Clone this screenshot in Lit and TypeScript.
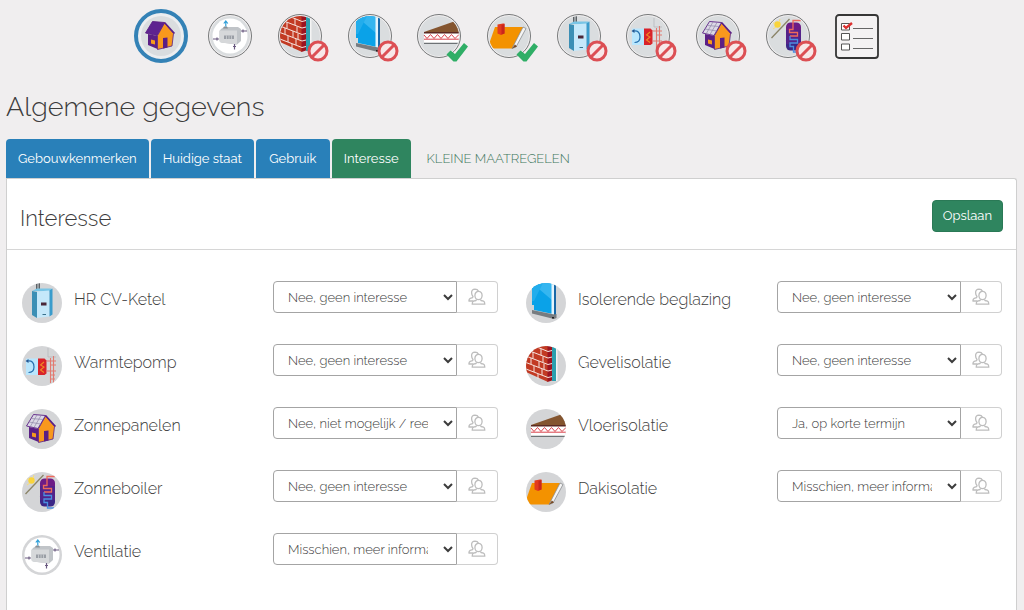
import { LitElement, html, css, svg, nothing } from "lit";
import { customElement, property, state } from "lit/decorators.js";
import { classMap } from "lit/directives/class-map.js";

type Art =
  | "home" | "ventilation" | "wall" | "glass" | "floor"
  | "roof" | "boiler" | "heatpump" | "panels" | "solar";

const house = (solar: boolean) => svg`
  <path d="M7 18 16.500 20V33L7 29Z" fill="#5b1f85"/>
  <path d="M10 23.500 14 24.500V28.500L10 27.500Z" fill="#f79a1c"/>
  <path d="M16.500 19.500 23.500 7 32.500 17.500 31 30 16.500 33.500Z" fill="#f8981d" stroke="#5b1f85" stroke-width=".8"/>
  <path d="M22 22 26.500 21.500V31.500L22 32.500Z" fill="#5b1f85"/>
  <path d="M4.500 17 11.500 5.500 23.500 6.500 16 19.500Z" fill=${solar ? "#dcd9e6" : "#5e2390"} stroke="#5b1f85" stroke-width=".9"/>
  <path d="M23.500 6.500 33.500 17.500" stroke="#5b1f85" stroke-width="1.600" fill="none"/>
  ${solar
    ? svg`<path d="M7 13 18.500 15M9.500 9.500 21 10.500M8 18 15 6M12 18.500 19 6.500" stroke="#8f86a8" stroke-width=".7" fill="none"/>`
    : nothing}`;

const art: Record<Art, () => unknown> = {
  home: () => house(false),
  panels: () => house(true),
  ventilation: () => svg`
    <circle cx="20" cy="20" r="17.500" fill="#fff"/>
    <path d="M11 13 14 11H28L31 13V25L27 28.500 11 26.500Q9.500 26 9.500 24V15Z" fill="#c0c4c8"/>
    <path d="M9.500 14.500 27 14.500V28.500L11 26.500Q9.500 26 9.500 24Z" fill="#d6d8da"/>
    <path d="M13 12.500H18L17 10.500H14Z" fill="#8a9096"/>
    <path d="M14 19.500H24V23H14Z" fill="#9a9ea5"/>
    <path d="M16.500 19.500V23M19 19.500V23M21.500 19.500V23" stroke="#d6d8db" stroke-width=".7"/>
    <path d="M15.800 10.500V6M13.800 7.500 15.800 5 17.800 7.500" fill="none" stroke="#2f9fd8" stroke-width="1.200"/>
    <path d="M31 15H37M33 13.500V16.500M3 23H9M7 21.500V24.500M24.500 28V33.500M23 30.500H26" fill="none" stroke="#6a5a80" stroke-width="1.200"/>`,
  wall: () => svg`
    <path d="M0 0H22V36L0 26Z" fill="#c23a23"/>
    <path d="M21.500 0H26V34.500L21.500 36Z" fill="#9c1420"/>
    <path d="M26 0H30V35H26Z" fill="#2b9fae"/>
    <path d="M30 0H31.500V35H30Z" fill="#f4f4f4"/>
    <path d="M6 -1 22 5.500 26 4.500M0 3.500 22 12 26 11M0 10 22 18.500 26 17.500M0 16.500 22 25 26 24M0 23 22 31.500 26 30.500M15 2.500V9M7 6V12.500M17 10.500V16M5 12V18M13 15V21M18 17.500V23M8 20V26M16 23V29M12 28V33" fill="none" stroke="#f6e4df" stroke-width="1"/>`,
  glass: () => svg`
    <path d="M6 0H27V31L8 27V22H6Z" fill="#0aa2e8"/>
    <path d="M6 0H27V18Z" fill="#35b6f0"/>
    <path d="M6 0H17L8 18H6Z" fill="#22adec"/>
    <path d="M25.500 0H28V31H25.500Z" fill="#e4f4fc"/>
    <path d="M28 1H30V33H28Z" fill="#1768a8"/>
    <path d="M6 27 28 31.500 30.500 31V35L28 36 6 30.500Z" fill="#777c80"/>
    <path d="M26 34H28V35.500H26Z" fill="#222"/>`,
  floor: () => svg`
    <path d="M5 16 35 5.500 40 12V16.500H5Z" fill="#84552f"/>
    <path d="M5 17H40V27H5Z" fill="#fff"/>
    <path d="M5 16.800H40" stroke="#5b2a22" stroke-width="1.400"/>
    <path d="M5 19 8 22.500 11.500 18.500 15 22.500 18.500 18.500 22 22.500 25.500 18.500 29 22.500 32.500 18.500 36 22.500 40 18.500M5 23.200H40" fill="none" stroke="#d9404a" stroke-width="1"/>
    <path d="M5 27.300H40" stroke="#6d7275" stroke-width="1.300"/>`,
  roof: () => svg`
    <path d="M6 11H35L24 32.500H3L0 28Z" fill="#f39200"/>
    <path d="M34 11 37 12.500 27 31 23 32.500Z" fill="#f5f5f5" stroke="#8a8d90" stroke-width=".8"/>
    <path d="M23 32.500 26 28.500 28 30.500Z" fill="#774a25"/>
    <path d="M8.500 8.500 14 7.500H15.500V17.500L12 19 8.500 17.500Z" fill="#e33b1e"/>
    <path d="M12.500 9 15.500 8V17.500L12.500 18.500Z" fill="#c9261d"/>`,
  boiler: () => svg`
    <path d="M14 0H15.500V7H14ZM16.500 0H18V7H16.500Z" fill="#5d6266"/>
    <path d="M10 8 15 5.500H30L27.500 8.500Z" fill="#79c5e6"/>
    <path d="M10 8 15 9V35L10 32Z" fill="#3b8fb5"/>
    <path d="M15 8.500 27.500 7.500V33.500L15 35Z" fill="#c5e8fa"/>
    <path d="M27.500 7.500 30.500 5.500V31.500L27.500 33.500Z" fill="#3a9ccc"/>
    <path d="M19 19.500H24.500V22.500H19Z" fill="#4b2738"/>
    <path d="M20.500 31H24V32H20.500Z" fill="#39718c"/>`,
  heatpump: () => svg`
    <path d="M26 2V11H34" fill="none" stroke="#b6b9bb" stroke-width=".8"/>
    <path d="M4 12.500H16V29H4Z" fill="#b9e6fd"/>
    <path d="M16 12.500H22.500L24.500 14.500V27.500L22.500 29H16Z" fill="#d8232a"/>
    <path d="M6 15Q12 14.500 12 21 12 26.500 6.500 26.500" fill="none" stroke="#256fae" stroke-width="1.200"/>
    <path d="M3.500 15 6.500 13V17Z" fill="#25558f"/>
    <path d="M22 16 18.500 19 22 21 18.500 24 22 26.500" fill="none" stroke="#f08a24" stroke-width="1.100"/>
    <path d="M24.500 15H34M24.500 25H34M28.500 12V37M31.500 10V37M28 19H34M28 29H33M28 33H33" fill="none" stroke="#e27a70" stroke-width="1.100"/>`,
  solar: () => svg`
    <circle cx="9.500" cy="8.500" r="3.200" fill="#f9d43b"/>
    <path d="M4 6 7 8M12 3 11 6M5 13 8 11" stroke="#f6dd7a" stroke-width="1"/>
    <path d="M3.500 22 21.500 3" stroke="#8a8468" stroke-width="1.300"/>
    <rect x="18" y="6.500" width="15" height="14" rx="4.500" fill="#6d1c86"/>
    <rect x="18" y="20" width="15" height="14.500" rx="4.500" fill="#3b2787"/>
    <path d="M18 14H33V28H18Z" fill="#53228a"/>
    <path d="M33 4.500H25V13.500H21.500V16.500H29.500V20H22" fill="none" stroke="#ee6a5b" stroke-width="1.300"/>
    <path d="M22 20V23.500H29.500V27H22V30.500H25.500V36H32" fill="none" stroke="#4a8fe0" stroke-width="1.300"/>`,
};

@customElement("measure-icon")
class MeasureIcon extends LitElement {
  @property() name: Art = "home";

  static styles = css`
    :host { display: block; width: 40px; height: 40px; border-radius: 50%; overflow: hidden; background: var(--disc, #d4d5d7); }
    .art { display: block; width: 100%; height: 100%; }
  `;

  render() {
    return html`<svg class="art" viewBox="0 0 40 40" aria-hidden="true">${art[this.name]()}</svg>`;
  }
}

interface Step { art: Art; label: string; mark?: "ban" | "check"; active?: boolean }
interface Interest { art: Art; label: string; value: string }

const NO = "Nee, geen interesse";
const MAYBE = "Misschien, meer informatie gewenst";
const SOON = "Ja, op korte termijn";
const NOT_POSSIBLE = "Nee, niet mogelijk / reeds uitgevoerd";
const OPTIONS = [SOON, MAYBE, NO, NOT_POSSIBLE];

const STEPS: Step[] = [
  { art: "home", label: "Algemene gegevens", active: true },
  { art: "ventilation", label: "Ventilatie" },
  { art: "wall", label: "Gevelisolatie", mark: "ban" },
  { art: "glass", label: "Isolerende beglazing", mark: "ban" },
  { art: "floor", label: "Vloerisolatie", mark: "check" },
  { art: "roof", label: "Dakisolatie", mark: "check" },
  { art: "boiler", label: "HR CV-Ketel", mark: "ban" },
  { art: "heatpump", label: "Warmtepomp", mark: "ban" },
  { art: "panels", label: "Zonnepanelen", mark: "ban" },
  { art: "solar", label: "Zonneboiler", mark: "ban" },
];

const COLUMNS: Interest[][] = [
  [
    { art: "boiler", label: "HR CV-Ketel", value: NO },
    { art: "heatpump", label: "Warmtepomp", value: NO },
    { art: "panels", label: "Zonnepanelen", value: NOT_POSSIBLE },
    { art: "solar", label: "Zonneboiler", value: NO },
    { art: "ventilation", label: "Ventilatie", value: MAYBE },
  ],
  [
    { art: "glass", label: "Isolerende beglazing", value: NO },
    { art: "wall", label: "Gevelisolatie", value: NO },
    { art: "floor", label: "Vloerisolatie", value: SOON },
    { art: "roof", label: "Dakisolatie", value: MAYBE },
  ],
];

const TABS = ["Gebouwkenmerken", "Huidige staat", "Gebruik", "Interesse"];

@customElement("app-root")
class AppRoot extends LitElement {
  @state() private tab = "Interesse";

  static styles = css`
    :host {
      display: block;
      min-height: 100vh;
      box-sizing: border-box;
      background: #f0eeef;
      color: #3c3c3c;
      font-family: Raleway, Lato, "Open Sans", sans-serif;
      font-size: 13px;
      line-height: 20px;
    }
    * { box-sizing: border-box; }
    .page { display: flex; flex-direction: column; min-height: 100vh; padding: 9px 7px 0 6px; }

    .steps-wrap { padding-right: 5px; }
    .steps { display: grid; grid-template-columns: repeat(11, 1fr); max-width: 766px; height: 54px; margin: 0 auto; place-items: center; }
    .step { position: relative; display: block; width: 44px; height: 44px; padding: 1px; border: 1px solid #77797a; border-radius: 50%; --disc: #dadddf; }
    .step.active { width: 54px; height: 54px; padding: 3px; border: 4px solid #3482b6; background: #eceef0; }
    .mark { position: absolute; left: 28px; top: 25px; width: 22px; height: 22px; }
    .list { display: block; width: 46px; height: 46px; }
    .list-art { display: block; width: 100%; height: 100%; }

    .title { margin: 24px 0 0; font-size: 27px; line-height: 40px; font-weight: 300; }

    .tabs { display: flex; gap: 2px; margin-top: 12px; }
    .tab { height: 39px; min-width: 74px; padding: 0 12px; border: 0; border-radius: 4px 4px 0 0; background: #2980b9; color: #fff; font: inherit; cursor: pointer; }
    .tab.active { background: #2f855f; }
    .tab.plain { padding: 0 14px; background: none; color: #3f775d; font-weight: 300; text-transform: uppercase; }

    .panel { flex: 1; background: #fff; border: 1px solid #cfcfcf; border-bottom: 0; border-top-right-radius: 3px; }
    .panel-head { display: flex; align-items: center; justify-content: space-between; min-height: 71px; padding: 4px 13px 0; border-bottom: 1px solid #d6d6d6; }
    .subtitle { margin: 0; padding-top: 4px; font-size: 22px; line-height: 32px; font-weight: 300; }
    .save { height: 32px; padding: 0 10px; border: 1px solid #2a7956; border-radius: 4px; background: #2f855f; color: #fff; font: inherit; cursor: pointer; }

    .columns { display: grid; grid-template-columns: 1fr 1fr; gap: 28px; padding: 31px 14px 0 15px; }
    .interests { display: flex; flex-direction: column; gap: 21px; margin: 0; padding: 0; list-style: none; }
    .interest { display: flex; align-items: flex-start; height: 42px; }
    .disc { margin-top: 2px; }
    .name { flex: 1; padding: 7px 8px 0 12px; font-size: 16px; line-height: 24px; font-weight: 300; }
    .group { display: flex; width: 225px; height: 32px; }
    .choice { flex: 1; min-width: 0; height: 32px; padding: 0 12px 0 10px; border: 1px solid #a4a4a4; border-radius: 4px 0 0 4px; background: #fff; color: #3c3c3c; font: inherit; font-weight: 300; }
    .people { display: grid; place-items: center; width: 41px; padding: 0; border: 1px solid #d0d0d0; border-left: 0; border-radius: 0 4px 4px 0; background: #fff; cursor: pointer; }
    .people-art { width: 18px; height: 18px; }
  `;

  private mark(kind: "ban" | "check") {
    return kind === "ban"
      ? html`<svg class="mark" viewBox="0 0 22 22" aria-hidden="true">
          <circle cx="11" cy="11" r="9" fill="#f7e7e8" stroke="#dc4f54" stroke-width="3"/>
          <path d="M5 17 17 5" stroke="#dc4f54" stroke-width="3"/>
        </svg>`
      : html`<svg class="mark" viewBox="0 0 22 22" aria-hidden="true">
          <path d="M.5 14.500 4.500 10.500 9 14 18 3 22 6.500 10.500 21.500 7.500 21.500Z" fill="#2fae66"/>
        </svg>`;
  }

  private row(item: Interest, id: string) {
    return html`<li class="interest">
      <measure-icon class="disc" name=${item.art}></measure-icon>
      <label class="name" for=${id}>${item.label}</label>
      <div class="group">
        <select class="choice" id=${id}>
          ${OPTIONS.map((o) => html`<option ?selected=${o === item.value}>${o}</option>`)}
        </select>
        <button class="people" type="button" aria-label="Bewoners">
          <svg class="people-art" viewBox="0 0 18 18" fill="none" stroke="#bdbdbd" stroke-width="1.300" stroke-linejoin="round" aria-hidden="true">
            <ellipse cx="10.500" cy="7.500" rx="3.600" ry="4.200"/>
            <path d="M8.500 11.500 8 12.500 5.500 13.200Q4.200 13.700 4.200 16.200H16.800Q16.800 13.700 15.500 13.200L13 12.500 12.500 11.500"/>
            <path d="M10.500 3.200Q9.500 1.200 7 1.200 3.500 1.300 3.600 4.800 3.600 7 5 8.500L4.600 9.600 2.200 10.300Q.9 10.900 .9 13H5.300"/>
          </svg>
        </button>
      </div>
    </li>`;
  }

  render() {
    return html`<div class="page">
      <div class="steps-wrap">
        <nav class="steps" aria-label="Onderdelen">
          ${STEPS.map((s) => html`<a class=${classMap({ step: true, active: !!s.active })} href="#" aria-label=${s.label}>
            <measure-icon name=${s.art}></measure-icon>
            ${s.mark ? this.mark(s.mark) : nothing}
          </a>`)}
          <a class="list" href="#" aria-label="Overzicht">
            <svg class="list-art" viewBox="0 0 46 46" fill="none" aria-hidden="true">
              <rect x="2" y="2" width="42" height="43" rx="3" fill="#f4f2f3" stroke="#363636" stroke-width="1.800"/>
              <path d="M7.500 10.500H15.500V17H7.500ZM7.500 20.500H15.500V27H7.500ZM7.500 31H15.500V37H7.500Z" fill="#fff" stroke="#555" stroke-width="1"/>
              <path d="M19 15.500H39M19 25.500H39M19 35.500H39" stroke="#666" stroke-width="1.200"/>
              <path d="M9.500 12.500 12 15 18 10" stroke="#dc2f2f" stroke-width="2.400"/>
            </svg>
          </a>
        </nav>
      </div>
      <h1 class="title">Algemene gegevens</h1>
      <div class="tabs" role="tablist">
        ${TABS.map((t) => html`<button class=${classMap({ tab: true, active: t === this.tab })} role="tab"
          aria-selected=${t === this.tab} @click=${() => (this.tab = t)}>${t}</button>`)}
        <button class="tab plain" role="tab" aria-selected="false">Kleine maatregelen</button>
      </div>
      <section class="panel">
        <header class="panel-head">
          <h2 class="subtitle">Interesse</h2>
          <button class="save" type="button">Opslaan</button>
        </header>
        <div class="columns">
          ${COLUMNS.map((col, c) => html`<ul class="interests">${col.map((item, i) => this.row(item, `interest-${c}-${i}`))}</ul>`)}
        </div>
      </section>
    </div>`;
  }
}
